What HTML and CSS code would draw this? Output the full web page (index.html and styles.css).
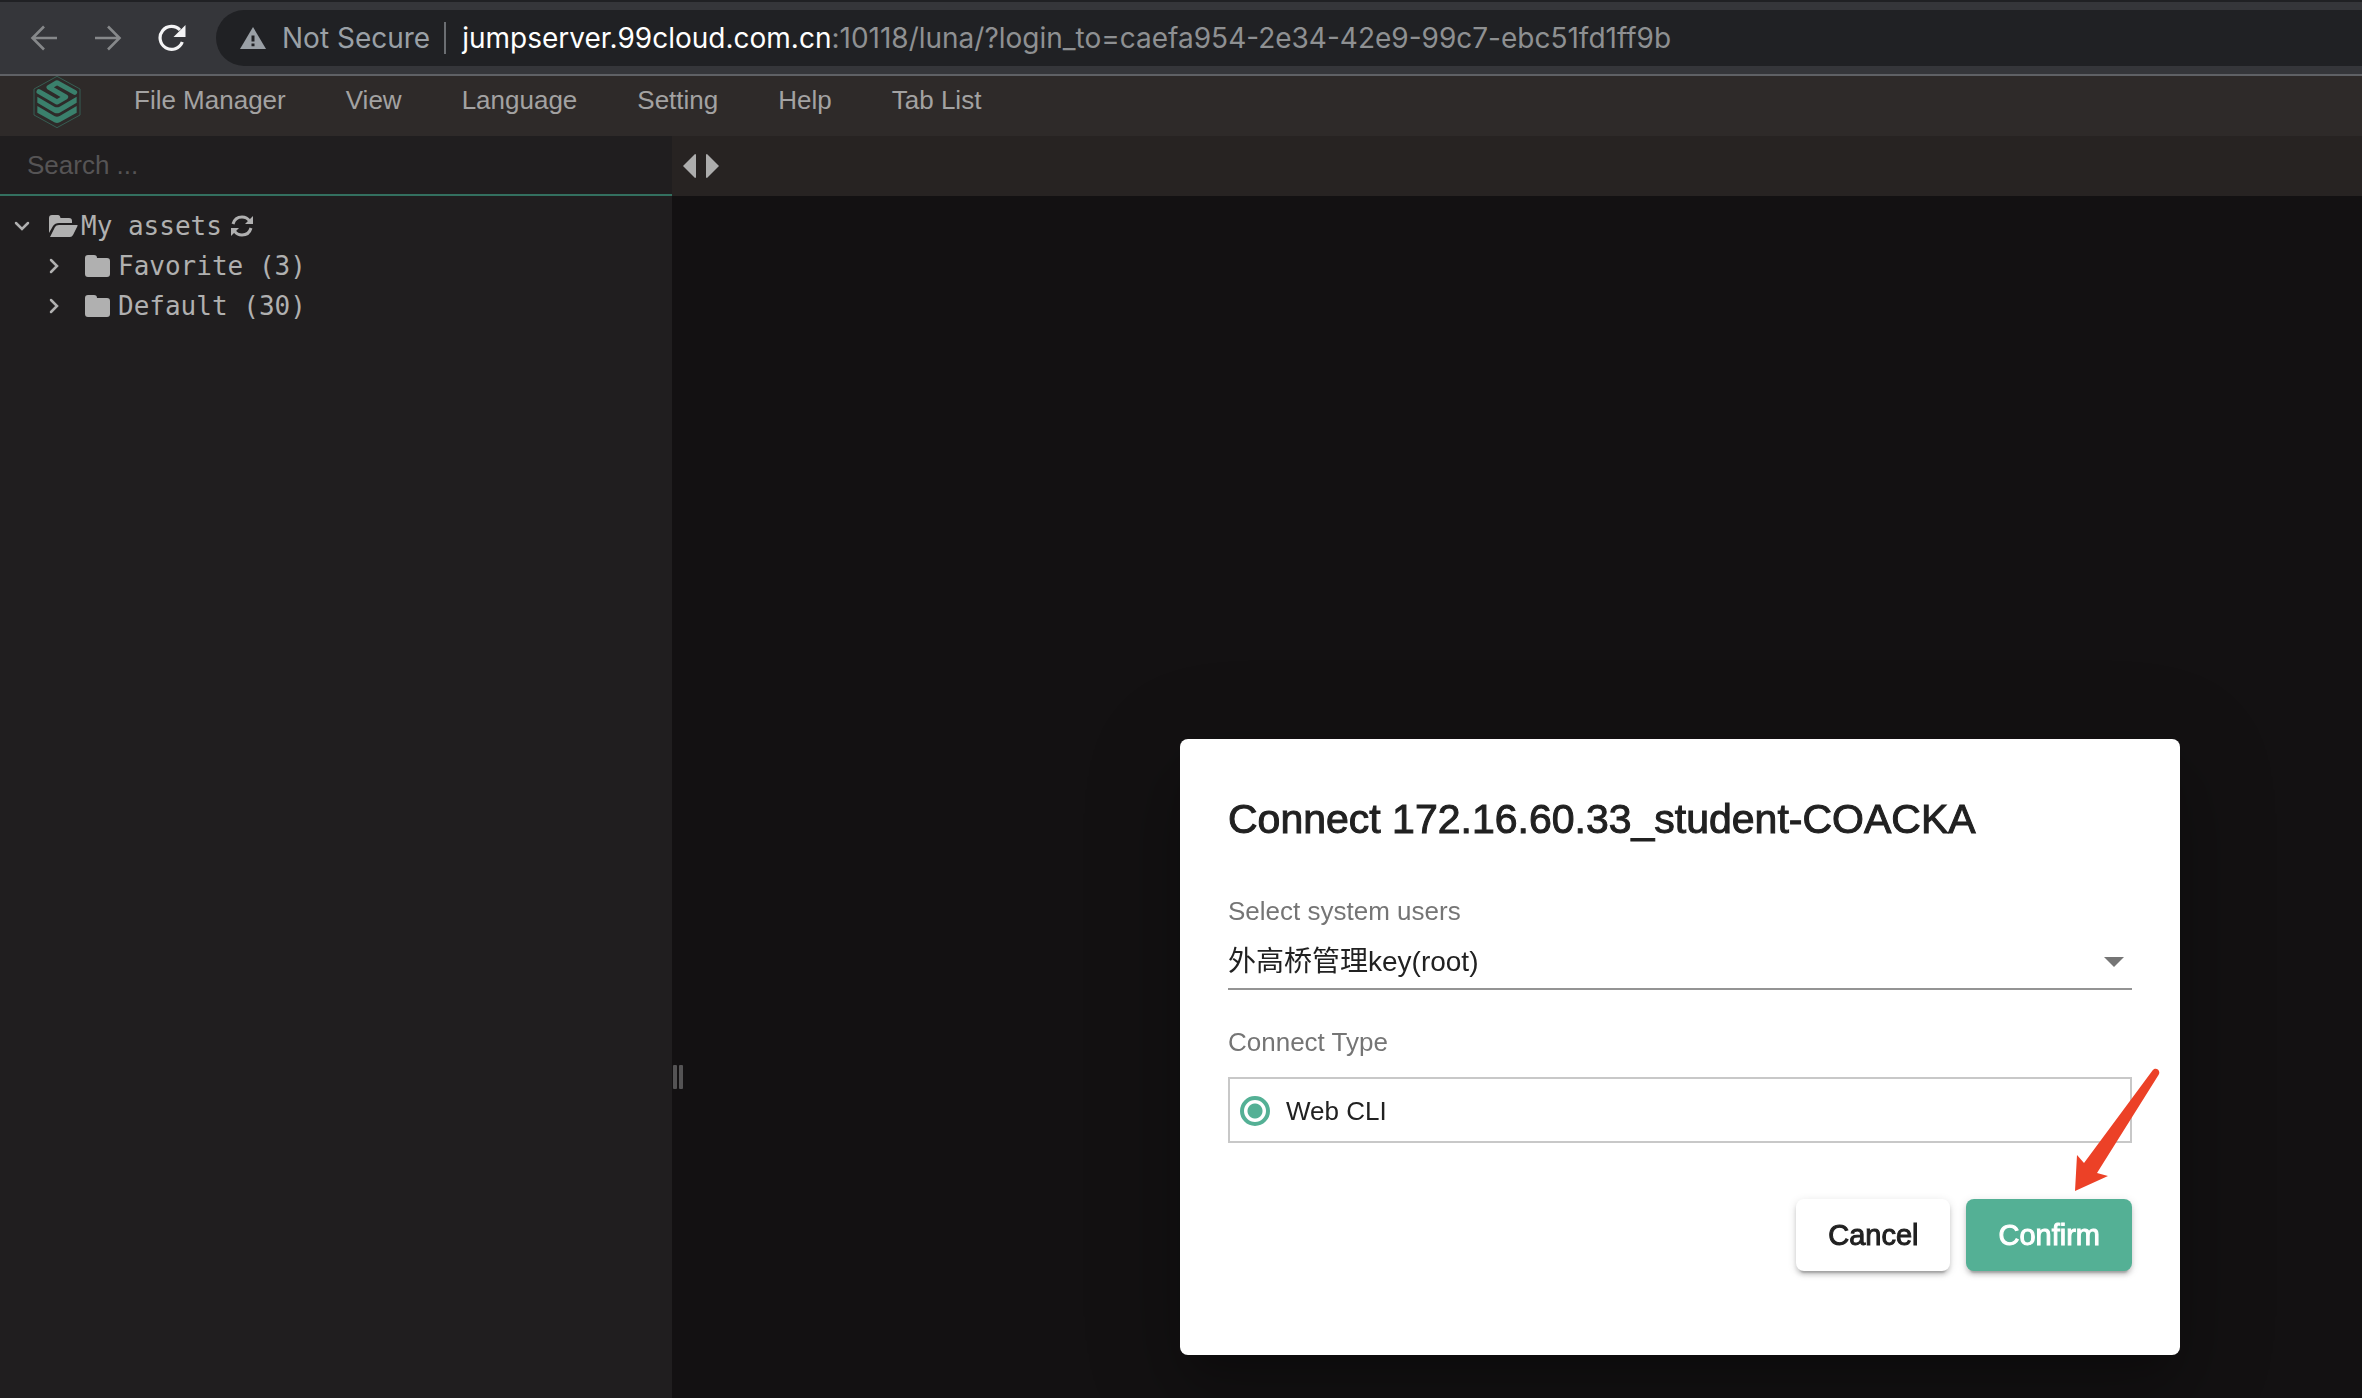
FILE: index.html
```html
<!DOCTYPE html>
<html lang="en">
<head>
<meta charset="utf-8">
<meta name="viewport" content="width=device-width, initial-scale=1">
<title>Luna</title>
<link rel="stylesheet" href="styles.css">
</head>
<body>
<header class="browser">
  <button class="nav-btn" type="button" aria-label="Back"><svg width="28" height="28" viewBox="0 0 28 28"><path d="M27 14H2.500M14 2.500 2.500 14 14 25.500" fill="none" stroke="#86888a" stroke-width="2.600"/></svg></button>
  <button class="nav-btn" type="button" aria-label="Forward"><svg width="28" height="28" viewBox="0 0 28 28"><path d="M1 14h24.500M14 2.500 25.500 14 14 25.500" fill="none" stroke="#86888a" stroke-width="2.600"/></svg></button>
  <button class="nav-btn" type="button" aria-label="Reload"><svg width="28" height="28" viewBox="0 0 28 28"><path d="M24.300 18A11.500 11.500 0 1 1 22 6" fill="none" stroke="#f4f4f5" stroke-width="3.200"/><path d="M27.500 1v12h-12z" fill="#f4f4f5"/></svg></button>
  <div class="address">
    <svg class="warn" width="26" height="22" viewBox="0 0 26 22"><path d="M13 0 26 22H0z" fill="#9aa0a6"/><path d="M11.500 8.500h3v6h-3zM11.500 16.500h3v2.800h-3z" fill="#202124"/></svg>
    <span class="insecure">Not Secure</span>
    <span class="divider"></span>
    <span class="url"><span class="host">jumpserver.99cloud.com.cn</span>:10118/luna/?login_to=caefa954-2e34-42e9-99c7-ebc51fd1ff9b</span>
  </div>
</header>
<nav class="menu">
  <a class="logo" href="#" aria-label="Home"><svg width="48" height="52" viewBox="38 18 144 156"><path d="M110 19 179 57v78l-69 38-69-38V57z" fill="none" stroke="#38695c" stroke-width="2.500"/><path d="M163 67 110 38 86 52 136 81 110 96 56 65" fill="none" stroke="#3a806c" stroke-width="15" stroke-linecap="round" stroke-linejoin="round"/><path d="M51 80 102 110q8 4 16 0L169 80v18l-51 30q-8 4-16 0L51 98zM51 108 102 138q8 4 16 0L169 108v20l-51 29q-8 4-16 0L51 128z" fill="#3a806c"/></svg></a>
  <a class="menu-item" href="#">File Manager</a>
  <a class="menu-item" href="#">View</a>
  <a class="menu-item" href="#">Language</a>
  <a class="menu-item" href="#">Setting</a>
  <a class="menu-item" href="#">Help</a>
  <a class="menu-item" href="#">Tab List</a>
</nav>
<div class="workspace">
  <aside class="sidebar">
    <input class="search" type="text" placeholder="Search ..." aria-label="Search">
    <ul class="tree">
      <li class="node">
        <svg class="chevron" width="18" height="18" viewBox="0 0 18 18"><path d="m3 6 6 6 6-6" fill="none" stroke="#b0b0b0" stroke-width="2.500" stroke-linecap="round"/></svg>
        <svg class="folder-open" width="29" height="22" viewBox="0 0 29 22"><path d="M0 18V3Q0 0 3 0h6q2 0 2.500 3H20q3 0 3 3v2H10Q6 8 4 11zM1 22 6 12q1-2 4-2h18q1 0 .5 1L24 20q-1 2-3 2z" fill="#b0b0b0"/></svg>
        <span>My assets</span>
        <svg class="refresh" width="22" height="22" viewBox="0 0 22 22"><g fill="none" stroke="#b0b0b0" stroke-width="3"><path d="M2 9Q4 2 11 2q5 0 7.500 4M20 13q-2 7-9 7-5 0-7.500-4"/></g><path d="M22 1v8h-8zM0 21v-8h8z" fill="#b0b0b0"/></svg>
      </li>
      <li class="node child">
        <svg class="chevron" width="18" height="18" viewBox="0 0 18 18"><path d="m6 3 6 6-6 6" fill="none" stroke="#b0b0b0" stroke-width="2.500" stroke-linecap="round"/></svg>
        <svg class="folder" width="25" height="22" viewBox="0 0 25 22"><path d="M0 3q0-3 3-3h6q3 0 3 3h10q3 0 3 3v13q0 3-3 3H3q-3 0-3-3z" fill="#b0b0b0"/></svg>
        <span>Favorite (3)</span>
      </li>
      <li class="node child">
        <svg class="chevron" width="18" height="18" viewBox="0 0 18 18"><path d="m6 3 6 6-6 6" fill="none" stroke="#b0b0b0" stroke-width="2.500" stroke-linecap="round"/></svg>
        <svg class="folder" width="25" height="22" viewBox="0 0 25 22"><path d="M0 3q0-3 3-3h6q3 0 3 3h10q3 0 3 3v13q0 3-3 3H3q-3 0-3-3z" fill="#b0b0b0"/></svg>
        <span>Default (30)</span>
      </li>
    </ul>
  </aside>
  <main class="content">
    <div class="tabs">
      <button class="tab-btn" type="button" aria-label="Previous tab"><svg width="14" height="26" viewBox="0 0 14 26"><path d="M12 1q1 0 1 1v22q0 1-1 1L0 13z" fill="#adadad"/></svg></button>
      <button class="tab-btn" type="button" aria-label="Next tab"><svg width="14" height="26" viewBox="0 0 14 26"><path d="M2 1Q1 1 1 2v22q0 1 1 1l12-12z" fill="#adadad"/></svg></button>
    </div>
    <div class="stage"><div class="grip"><i></i><i></i></div></div>
  </main>
</div>
<div class="overlay">
  <form class="dialog" role="dialog" aria-labelledby="dialog-title">
    <h1 class="title" id="dialog-title">Connect 172.16.60.33_student-COACKA</h1>
    <label class="label" for="user">Select system users</label>
    <div class="select-wrap">
      <select class="select" id="user"><option>外高桥管理key(root)</option></select>
      <svg class="caret" width="20" height="10" viewBox="0 0 20 10"><path d="M0 0h20L10 10z" fill="#757575"/></svg>
    </div>
    <span class="label type-label" id="type-label">Connect Type</span>
    <div class="radio-box" role="radiogroup" aria-labelledby="type-label">
      <input class="radio" type="radio" id="cli" name="type" checked>
      <label class="radio-label" for="cli">Web CLI</label>
    </div>
    <div class="actions">
      <button class="btn" type="button">Cancel</button>
      <button class="btn primary" type="button">Confirm</button>
    </div>
    <svg class="pointer" width="86" height="124" viewBox="0 0 86 124"><path d="M0 123 2 87l7 8L77.500 2.500c3-4 9 0 6 4.500L22 105l11 3z" fill="#ec4127"/></svg>
  </form>
</div>
</body>
</html>
```
FILE: styles.css
```css
* { box-sizing: border-box; }

body {
  margin: 0;
  min-height: 100vh;
  display: flex;
  flex-direction: column;
  background: #131112;
  font-family: "Liberation Sans", "Noto Sans CJK SC", sans-serif;
  font-size: 26px;
  color: #a3a2a2;
}

svg { display: block; flex: none; }
button { margin: 0; border: 0; background: none; font: inherit; cursor: pointer; }
a { color: inherit; text-decoration: none; }

/* Browser toolbar */
.browser {
  display: flex;
  align-items: center;
  gap: 36px;
  height: 76px;
  padding-left: 30px;
  background: #35363a;
  border-top: 2px solid #202124;
  border-bottom: 2px solid #5f6165;
}
.nav-btn { padding: 0; }
.address {
  flex: 1;
  display: flex;
  align-items: center;
  height: 56px;
  margin-left: -6px;
  padding-left: 24px;
  border-radius: 28px 0 0 28px;
  background: #202124;
  font-family: Inter, sans-serif;
  font-size: 28px;
  white-space: nowrap;
}
.insecure { margin-left: 16px; color: #9aa0a6; }
.divider { width: 2px; height: 32px; margin: 0 16px 0 14px; background: #6b6e72; }
.url { color: #8e9092; }
.host { color: #fff; }

/* Application menu */
.menu {
  display: flex;
  height: 60px;
  padding-left: 33px;
  gap: 60px;
  background: #2e2a29;
  line-height: 48px;
}
.logo { margin-right: -7px; }

.workspace { flex: 1; display: flex; }

/* Asset tree */
.sidebar { flex: none; width: 672px; background: #201e1f; }
.search {
  display: block;
  width: 100%;
  height: 60px;
  padding: 0 27px;
  border: 0;
  border-bottom: 2px solid #33705f;
  outline: 0;
  background: transparent;
  color: #a3a2a2;
  font: inherit;
}
.search::placeholder { color: #565455; opacity: 1; }
.tree {
  margin: 0;
  padding: 10px 0 0 13px;
  list-style: none;
  font-family: "DejaVu Sans Mono", monospace;
  line-height: 40px;
  color: #b0b0b0;
}
.node { display: flex; align-items: center; height: 40px; }
.child { padding-left: 32px; }
.folder-open { margin: 0 3px 0 18px; }
.folder { margin: 0 8px 0 22px; }
.refresh { margin-left: 9px; }

/* Tabs and terminal area */
.content { flex: 1; display: flex; flex-direction: column; }
.tabs { display: flex; align-items: center; gap: 8px; height: 60px; padding-left: 11px; background: #272322; }
.tab-btn { padding: 0; }
.stage { flex: 1; display: flex; align-items: center; }
.grip { display: flex; gap: 2px; margin: 560px 0 0 1px; }
.grip i { width: 4px; height: 24px; border-radius: 1px; background: #545354; }

/* Connect dialog */
.overlay {
  position: fixed;
  inset: 0;
  display: flex;
  align-items: flex-end;
  justify-content: flex-end;
  padding: 0 182px 43px 0;
}
.dialog {
  position: relative;
  display: flex;
  flex-direction: column;
  width: 1000px;
  max-width: 100%;
  padding: 48px 48px 84px;
  border-radius: 8px;
  background: #fff;
  color: #212121;
  box-shadow: 0 22px 30px -14px rgba(0, 0, 0, .2), 0 48px 76px 6px rgba(0, 0, 0, .14), 0 18px 92px 16px rgba(0, 0, 0, .12);
}
.title { margin: 0 0 40px; font-size: 41px; font-weight: 400; line-height: 64px; -webkit-text-stroke: 1px; }
.label { line-height: 40px; color: #757575; }
.select-wrap { display: flex; align-items: center; height: 59px; padding-top: 4px; border-bottom: 2px solid #949494; }
.select {
  flex: 1;
  height: 48px;
  padding: 0;
  border: 0;
  outline: 0;
  appearance: none;
  background: transparent;
  color: #212121;
  font: inherit;
  font-size: 28px;
}
.caret { margin-right: 8px; }
.type-label { margin: 32px 0 15px; }
.radio-box { display: flex; align-items: center; gap: 16px; height: 66px; padding: 2px 0 0 10px; border: 2px solid #c8c8c8; }
.radio {
  flex: none;
  width: 30px;
  height: 30px;
  margin: 0;
  appearance: none;
  border: 4px solid #54b095;
  border-radius: 50%;
  background: radial-gradient(circle, #54b095 7px, #fff 8px);
}
.actions { display: flex; justify-content: flex-end; gap: 16px; margin-top: 56px; }
.btn {
  height: 72px;
  padding: 0 32px;
  border-radius: 8px;
  background: #fff;
  color: #212121;
  font-size: 29px;
  -webkit-text-stroke: 1px;
  box-shadow: 0 6px 2px -4px rgba(0, 0, 0, .2), 0 4px 4px rgba(0, 0, 0, .14), 0 2px 10px rgba(0, 0, 0, .12);
}
.primary { background: #54b095; color: #fff; }
.pointer { position: absolute; right: 19px; bottom: 163px; }
```
